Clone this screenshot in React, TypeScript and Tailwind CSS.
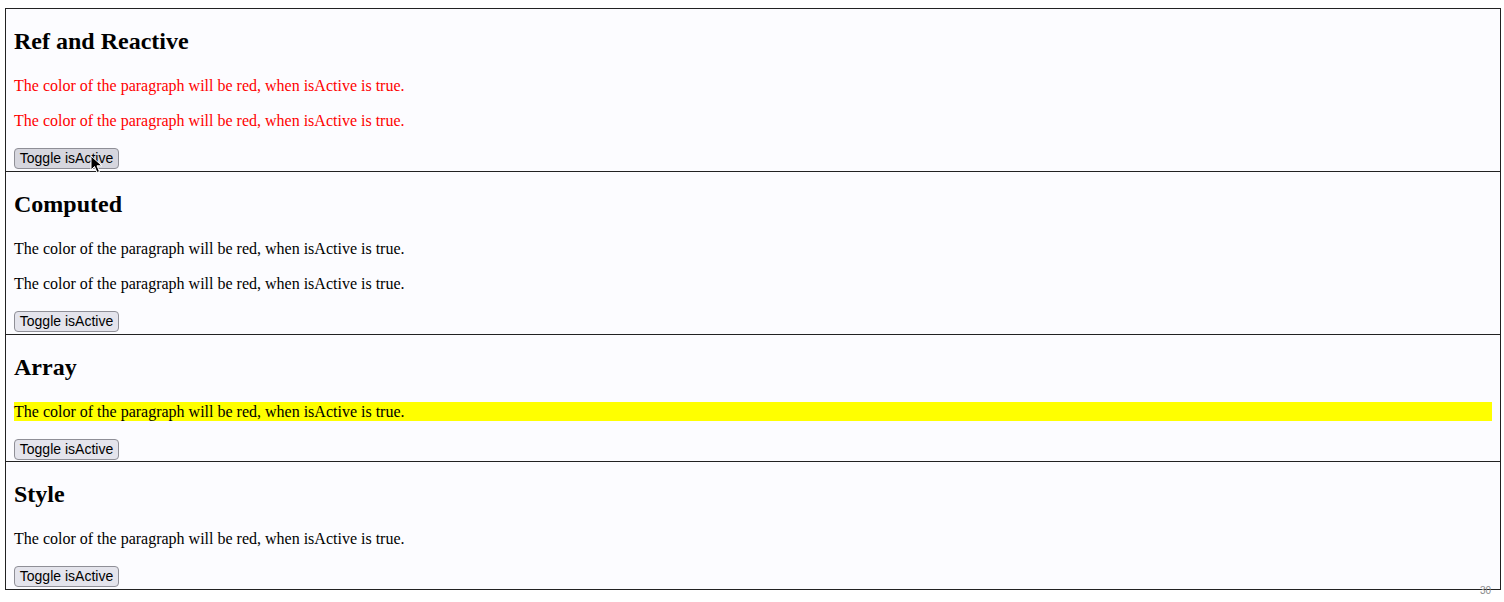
import React from "react";

const serif = "font-['Times_New_Roman','Liberation_Serif',serif]";

function Btn({ pressed = false }: { pressed?: boolean }) {
  return (
    <button
      className={`inline-block h-[21px] w-[105px] rounded-[4px] border border-[#8f8f97] ${
        pressed ? "bg-[#d6d6de]" : "bg-[#e4e4ec]"
      } px-0 text-[14px] leading-[19px] text-black font-['Liberation_Sans',Arial,sans-serif] align-top`}
    >
      Toggle isActive
    </button>
  );
}

function Section({
  title,
  children,
  first = false,
}: {
  title: string;
  children: React.ReactNode;
  first?: boolean;
}) {
  return (
    <section
      className={`ml-[5px] w-[1496px] border border-[#222] ${
        first ? "" : "-mt-px"
      } bg-[#fcfcff] px-[8px]`}
    >
      <h2 className="mt-[18px] mb-[21px] text-[24px] leading-[28px] font-bold text-black">
        {title}
      </h2>
      {children}
    </section>
  );
}

function P({
  children,
  red = false,
  yellow = false,
}: {
  children: React.ReactNode;
  red?: boolean;
  yellow?: boolean;
}) {
  return (
    <p
      className={`${yellow ? "mt-[17px] mb-[16px] bg-[#ffff00]" : "my-[16px]"} text-[16px] leading-[19px] ${
        red ? "text-[#ff0000]" : "text-black"
      }`}
    >
      {children}
    </p>
  );
}

const TEXT = "The color of the paragraph will be red, when isActive is true.";

export default function App() {
  return (
    <div className={`relative min-h-[602px] w-[1504px] bg-white pt-[8px] ${serif}`}>
      <Section title="Ref and Reactive" first>
        <P red>{TEXT}</P>
        <P red>{TEXT}</P>
        <div className="h-[25px] pt-[2px]">
          <Btn pressed />
        </div>
      </Section>
      <Section title="Computed">
        <P>{TEXT}</P>
        <P>{TEXT}</P>
        <div className="h-[25px] pt-[2px]">
          <Btn />
        </div>
      </Section>
      <Section title="Array">
        <P yellow>{TEXT}</P>
        <div className="h-[24px] pt-[2px]">
          <Btn />
        </div>
      </Section>
      <Section title="Style">
        <P>{TEXT}</P>
        <div className="h-[25px] pt-[2px]">
          <Btn />
        </div>
      </Section>

      {/* mouse cursor */}
      <svg
        className="absolute left-[90px] top-[155px]"
        width="14"
        height="20"
        viewBox="0 0 14 20"
      >
        <path
          d="M1 1 L1 15 L4.5 11.5 L7 17.5 L9.5 16.5 L7 10.8 L12 10.8 Z"
          fill="#000"
          stroke="#fff"
          strokeWidth="1"
          strokeLinejoin="round"
        />
      </svg>

      {/* tiny overlay glyph */}
      <div className="absolute z-10 left-[1480px] top-[586px] text-[10px] leading-[10px] text-[#8a8a8a] font-['Liberation_Sans',sans-serif]">
        30
      </div>
    </div>
  );
}
